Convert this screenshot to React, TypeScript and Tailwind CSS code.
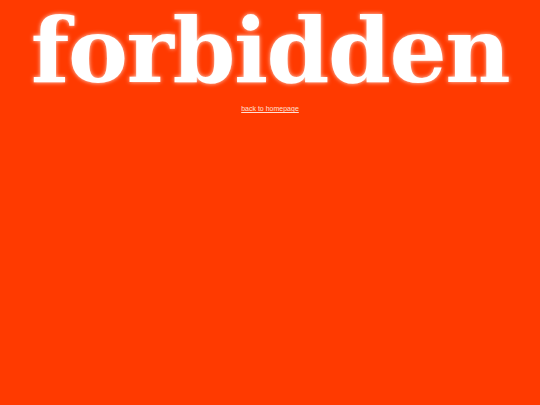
export default function App() {
  return (
    <div className="min-h-screen w-full bg-[#ff3a00] flex flex-col items-center">
      <h1 className="font-['DejaVu_Serif',serif] text-[90px] leading-none font-bold tracking-[-1.5px] text-white mt-[5px] [text-shadow:0_0_4px_rgba(255,255,255,0.8)]">
        forbidden
      </h1>
      <a
        href="#"
        className="mt-[9px] font-['Liberation_Sans',Arial,sans-serif] text-[7px] text-[#ffe0d6] underline"
      >
        back to homepage
      </a>
    </div>
  );
}
